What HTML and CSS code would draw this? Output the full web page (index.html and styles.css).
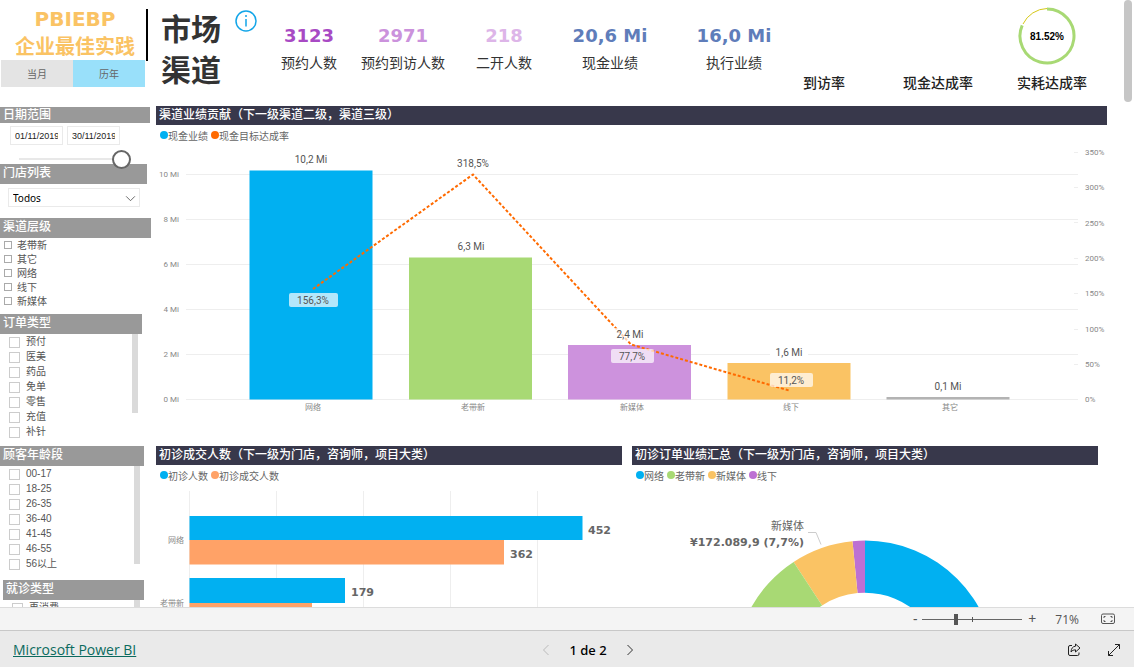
FILE: index.html
```html
<!DOCTYPE html>
<html lang="zh-CN">
<head>
<meta charset="utf-8">
<title>市场渠道 - Microsoft Power BI</title>
<link rel="stylesheet" href="styles.css">
</head>
<body>
<div class="report">
  <aside class="sidebar">
    <div class="brand"><span>PBIEBP</span><span>企业最佳实践</span></div>
    <div class="period">
      <button type="button" class="period-btn">当月</button>
      <button type="button" class="period-btn active">历年</button>
    </div>

    <section class="slicer slicer-date">
      <h2 class="slicer-title slim">日期范围</h2>
      <div class="dates">
        <input class="date" type="text" value="01/11/2019" aria-label="开始日期">
        <input class="date" type="text" value="30/11/2019" aria-label="结束日期">
      </div>
      <input class="date-range" type="range" min="0" max="100" value="100" aria-label="日期范围">
    </section>

    <section class="slicer slicer-store">
      <h2 class="slicer-title">门店列表</h2>
      <div class="select-wrap">
        <select class="select" aria-label="门店列表"><option>Todos</option></select>
        <svg class="chevron" viewBox="0 0 12 8" aria-hidden="true"><path d="M1 1.5l5 5 5-5"/></svg>
      </div>
    </section>

    <section class="slicer slicer-level">
      <h2 class="slicer-title">渠道层级</h2>
      <div class="options compact">
        <label class="option"><input type="checkbox">老带新</label>
        <label class="option"><input type="checkbox">其它</label>
        <label class="option"><input type="checkbox">网络</label>
        <label class="option"><input type="checkbox">线下</label>
        <label class="option"><input type="checkbox">新媒体</label>
      </div>
    </section>

    <section class="slicer slicer-order">
      <h2 class="slicer-title">订单类型</h2>
      <div class="scroll-list">
        <div class="options">
          <label class="option"><input type="checkbox">预付</label>
          <label class="option"><input type="checkbox">医美</label>
          <label class="option"><input type="checkbox">药品</label>
          <label class="option"><input type="checkbox">免单</label>
          <label class="option"><input type="checkbox">零售</label>
          <label class="option"><input type="checkbox">充值</label>
          <label class="option"><input type="checkbox">补针</label>
        </div>
        <span class="list-thumb short"></span>
      </div>
    </section>

    <section class="slicer slicer-age">
      <h2 class="slicer-title">顾客年龄段</h2>
      <div class="scroll-list">
        <div class="options">
          <label class="option"><input type="checkbox">00-17</label>
          <label class="option"><input type="checkbox">18-25</label>
          <label class="option"><input type="checkbox">26-35</label>
          <label class="option"><input type="checkbox">36-40</label>
          <label class="option"><input type="checkbox">41-45</label>
          <label class="option"><input type="checkbox">46-55</label>
          <label class="option"><input type="checkbox">56以上</label>
        </div>
        <span class="list-thumb"></span>
      </div>
    </section>

    <section class="slicer slicer-visit">
      <h2 class="slicer-title">就诊类型</h2>
      <div class="scroll-list">
        <div class="options">
          <label class="option"><input type="checkbox">再消费</label>
        </div>
        <span class="list-thumb"></span>
      </div>
    </section>
  </aside>

  <main class="main">
    <header class="header">
      <h1 class="title">市场<br>渠道</h1>
      <svg class="info" viewBox="0 0 24 24" role="img" aria-label="信息"><circle cx="12" cy="12" r="10"/><path d="M12 10v7.500"/><circle class="dot" cx="12" cy="7" r="1"/></svg>
      <div class="kpis">
        <div class="kpi"><strong class="value violet">3123</strong><span>预约人数</span></div>
        <div class="kpi"><strong class="value orchid">2971</strong><span>预约到访人数</span></div>
        <div class="kpi"><strong class="value lilac">218</strong><span>二开人数</span></div>
        <div class="kpi"><strong class="value blue">20,6 Mi</strong><span>现金业绩</span></div>
        <div class="kpi"><strong class="value blue">16,0 Mi</strong><span>执行业绩</span></div>
        <div class="rate"><span>到访率</span></div>
        <div class="rate"><span>现金达成率</span></div>
        <div class="rate">
          <svg class="gauge" viewBox="0 0 68 60"><path class="gauge-rest" d="M5 18A27.500 27.500 0 0 1 29 2.500"/><path class="gauge-fill" d="M29 3A27 27 0 1 1 4.200 19.300"/><text x="29" y="34">81.52%</text></svg>
          <span>实耗达成率</span>
        </div>
      </div>
    </header>

    <section class="panel">
      <h2 class="panel-title">渠道业绩贡献（下一级渠道二级，渠道三级）</h2>
      <div class="legend">
        <span class="key c-blue">现金业绩</span><span class="key c-orange">现金目标达成率</span>
      </div>
      <svg class="chart" viewBox="156 145 951 301">
        <path class="grid" d="M186 174.500H1078M186 219.500H1078M186 264.500H1078M186 309.500H1078M186 354.500H1078M186 399.500H1078"/>
        <path class="grid" d="M1074 152.500h4M1074 187.500h4M1074 222.500h4M1074 258.500h4M1074 293.500h4M1074 329.500h4M1074 364.500h4"/>
        <g class="axis end">
          <text x="179" y="177">10 Mi</text><text x="179" y="222">8 Mi</text><text x="179" y="267">6 Mi</text><text x="179" y="312">4 Mi</text><text x="179" y="357">2 Mi</text><text x="179" y="402">0 Mi</text>
        </g>
        <g class="axis">
          <text x="1085" y="155">350%</text><text x="1085" y="190">300%</text><text x="1085" y="226">250%</text><text x="1085" y="261">200%</text><text x="1085" y="296">150%</text><text x="1085" y="332">100%</text><text x="1085" y="367">50%</text><text x="1085" y="402">0%</text>
        </g>
        <rect class="f-blue" x="249.500" y="170.500" width="123" height="229"/>
        <rect class="f-green" x="409" y="257.500" width="123" height="142"/>
        <rect class="f-orchid" x="568" y="345" width="123" height="54.500"/>
        <rect class="f-yellow" x="727.500" y="363" width="123" height="36.500"/>
        <rect class="f-grey" x="886.500" y="397" width="123" height="2.500"/>
        <path class="trend" d="M313 289L473 174.500L631 344.500L789 390.500"/>
        <rect class="halo" x="612" y="328" width="36" height="13"/>
        <rect class="f-white" x="770" y="346" width="38" height="13"/>
        <rect class="tag" x="289" y="293" width="49" height="14" rx="2"/>
        <rect class="tag" x="611" y="349" width="43" height="14" rx="2"/>
        <rect class="tag" x="770" y="373" width="43" height="14" rx="2"/>
        <g class="data">
          <text x="311" y="163">10,2 Mi</text><text x="473" y="167">318,5%</text><text x="471" y="250">6,3 Mi</text><text x="630" y="338">2,4 Mi</text><text x="789" y="356">1,6 Mi</text><text x="948" y="390">0,1 Mi</text>
          <text x="313" y="304">156,3%</text><text x="632" y="360">77,7%</text><text x="791" y="384">11,2%</text>
        </g>
        <g class="axis mid">
          <text x="313" y="410">网络</text><text x="473" y="410">老带新</text><text x="632" y="410">新媒体</text><text x="791" y="410">线下</text><text x="950" y="410">其它</text>
        </g>
      </svg>
    </section>

    <div class="row">
      <section class="panel">
        <h2 class="panel-title">初诊成交人数（下一级为门店，咨询师，项目大类）</h2>
        <div class="legend">
          <span class="key c-blue">初诊人数</span><span class="key c-peach">初诊成交人数</span>
        </div>
        <svg class="chart" viewBox="156 485 466 150">
          <path class="grid" d="M189.500 491V635M276.500 491V635M363.500 491V635M450.500 491V635M537.500 491V635"/>
          <rect class="f-blue" x="189.500" y="516" width="393" height="24"/>
          <rect class="f-peach" x="189.500" y="540" width="314.500" height="24.500"/>
          <rect class="f-blue" x="189.500" y="578" width="155.500" height="25"/>
          <rect class="f-peach" x="189.500" y="603" width="122.500" height="24"/>
          <g class="axis end"><text x="184" y="543">网络</text><text x="184" y="606">老带新</text></g>
          <g class="strong"><text x="588" y="534">452</text><text x="510" y="558">362</text><text x="351" y="596">179</text></g>
        </svg>
      </section>
      <section class="panel">
        <h2 class="panel-title">初诊订单业绩汇总（下一级为门店，咨询师，项目大类）</h2>
        <div class="legend">
          <span class="key c-blue">网络</span><span class="key c-green">老带新</span><span class="key c-yellow">新媒体</span><span class="key c-purple">线下</span>
        </div>
        <svg class="chart" viewBox="632 485 466 186">
          <path class="f-blue" d="M865 540.600A130.400 130.400 0 0 1 995.400 671H943.300A78.300 78.300 0 0 0 865 592.700Z"/>
          <path class="f-purple" d="M865 540.600A130.400 130.400 0 0 0 852.500 541.200L857.500 593.100A78.300 78.300 0 0 1 865 592.700Z"/>
          <path class="f-yellow" d="M852.500 541.200A130.400 130.400 0 0 0 793.600 561.900L822.100 605.500A78.300 78.300 0 0 1 857.500 593.100Z"/>
          <path class="f-green" d="M793.600 561.900A130.400 130.400 0 0 0 734.600 671H786.700A78.300 78.300 0 0 1 822.100 605.500Z"/>
          <path class="leader" d="M808 532.500h8l5 12"/>
          <text class="slice-name" x="804" y="530">新媒体</text>
          <text class="slice-value" x="804" y="546">¥172.089,9 (7,7%)</text>
        </svg>
      </section>
    </div>
  </main>
  <span class="page-thumb"></span>
</div>

<div class="zoombar">
  <button type="button" class="zoom-btn" aria-label="缩小">-</button>
  <div class="zoom-track"><input class="zoom-range" type="range" min="0" max="100" value="33" aria-label="缩放"></div>
  <button type="button" class="zoom-btn" aria-label="放大">+</button>
  <span class="zoom-value">71%</span>
  <button type="button" class="icon-btn" aria-label="适应页面"><svg class="fit" viewBox="0 0 14 12"><rect x=".5" y="1" width="13" height="9.500" rx="1.500"/><path d="M3 5V3.500h1.500M9.500 3.500H11V5M11 7v1.500H9.500M4.500 8.500H3V7"/></svg></button>
</div>

<footer class="footer">
  <a class="brand-link" href="#">Microsoft Power BI</a>
  <nav class="pager" aria-label="页面">
    <button type="button" class="icon-btn" disabled aria-label="上一页"><svg class="arrow" viewBox="0 0 8 12"><path d="M6.500 1L1.500 6l5 5"/></svg></button>
    <span>1 de 2</span>
    <button type="button" class="icon-btn" aria-label="下一页"><svg class="arrow" viewBox="0 0 8 12"><path d="M1.500 1l5 5-5 5"/></svg></button>
  </nav>
  <div class="actions">
    <button type="button" class="icon-btn" aria-label="共享"><svg class="action" viewBox="0 0 14 14"><path d="M5 2.500H3Q1.500 2.500 1.500 4v7Q1.500 12.500 3 12.500h7.500Q12 12.500 12 11V9.500"/><path d="M8.500 1l4.500 4-4.500 4V6.800Q5.500 6.600 4 9 4.300 3.600 8.500 3.200Z"/></svg></button>
    <button type="button" class="icon-btn" aria-label="全屏"><svg class="action" viewBox="0 0 14 14"><path d="M1.500 12.500l11-11M8 1.500h4.500V6M1.500 8v4.500H6"/></svg></button>
  </div>
</footer>
</body>
</html>
```

FILE: styles.css
```css
* { box-sizing: border-box; }

body {
  margin: 0;
  height: 100vh;
  display: flex;
  flex-direction: column;
  overflow: hidden;
  background: #fff;
  color: #333;
  font-family: "Liberation Sans", "Noto Sans CJK SC", sans-serif;
}

h1, h2 { margin: 0; }
button { border: 0; padding: 0; background: none; font-family: inherit; color: inherit; }

.report {
  flex: 1;
  min-height: 0;
  display: flex;
  align-items: flex-start;
  overflow: hidden;
}

/* Sidebar */
.sidebar { width: 156px; flex: none; }
.brand {
  display: flex;
  flex-direction: column;
  width: 150px;
  height: 60px;
  padding-top: 5px;
  text-align: center;
  color: #fac364;
  font: bold 20px/28px "DejaVu Sans", "Noto Sans CJK SC", sans-serif;
}
.period { display: flex; width: 145px; height: 27px; padding-left: 1px; }
.period-btn { flex: 1; background: #e4e4e4; color: #666; font-size: 10px; }
.period-btn.active { background: #99e0fa; }

.slicer-date { margin-top: 20px; width: 150px; }
.slicer-store { width: 147px; margin-bottom: 11px; }
.slicer-level { width: 151px; margin-bottom: 6px; }
.slicer-order { width: 142px; margin-bottom: 7px; }
.slicer-age { width: 144px; margin-bottom: 9px; }
.slicer-visit { width: 144px; padding-left: 3px; }
.slicer-title {
  height: 20px;
  padding-left: 3px;
  background: #999;
  color: #fff;
  font-size: 12px;
  font-weight: 500;
  line-height: 19px;
}
.slicer-title.slim { height: 16px; line-height: 16px; }

.dates { display: flex; gap: 4px; padding: 3px 0 0 10px; }
.date {
  width: 53px;
  height: 19px;
  padding: 0 4px;
  border: 1px solid #eaeaea;
  color: #222;
  font: 9px "Liberation Sans", sans-serif;
}
.date-range {
  display: block;
  position: relative;
  z-index: 1;
  appearance: none;
  width: 112px;
  height: 10px;
  margin: 9px 0 0 19px;
  background: linear-gradient(#e8e8e8, #e8e8e8) center / 100% 2px no-repeat;
}
.date-range::-webkit-slider-thumb {
  appearance: none;
  width: 19px;
  height: 19px;
  border: 2px solid #666;
  border-radius: 50%;
  background: #fff;
}

.select-wrap { position: relative; margin: 4px 7px 0 8px; }
.select {
  display: block;
  appearance: none;
  width: 100%;
  height: 19px;
  padding: 0 4px;
  border: 1px solid #eaeaea;
  border-radius: 0;
  background: #fff;
  color: #000;
  font: 10px "Noto Sans", sans-serif;
}
.chevron { position: absolute; right: 4px; top: 7px; width: 11px; height: 7px; fill: none; stroke: #555; pointer-events: none; }

.options { flex: 1; padding-left: 9px; }
.option {
  display: flex;
  align-items: center;
  gap: 6px;
  height: 15px;
  color: #555;
  font-size: 10px;
  line-height: 15px;
}
.option input {
  appearance: none;
  width: 11px;
  height: 11px;
  margin: 2px 0 0;
  border: 1px solid #ccc;
  background: #fff;
}
.compact { padding-left: 4px; }
.compact .option { height: 14px; gap: 5px; }
.compact .option input { width: 8px; height: 8px; margin: 0; border-color: #aaa; }
.scroll-list { display: flex; padding-right: 4px; }
.list-thumb { width: 6px; height: 98px; background: #dadada; }
.list-thumb.short { height: 79px; }

/* Header */
.main { flex: 1; min-width: 0; margin-right: 27px; }
.header { display: flex; height: 106px; margin-left: -10px; }
.title {
  height: 52px;
  margin-top: 9px;
  padding-left: 13px;
  border-left: 2px solid #000;
  color: #333;
  font-size: 30px;
  line-height: 41px;
}
.info { width: 24px; height: 24px; margin: 9px 4px 0 13px; fill: none; stroke: #12a5e8; stroke-width: 1.500; }
.info .dot { fill: #12a5e8; stroke: none; }
.kpis {
  flex: 1;
  display: grid;
  grid-template-columns:
    minmax(0, 94fr) minmax(0, 94fr) minmax(0, 108fr) minmax(0, 104fr)
    minmax(0, 144fr) minmax(0, 36fr) minmax(0, 192fr) minmax(0, 36fr);
  justify-items: center;
  padding-right: 37px;
}
.kpi, .rate {
  display: flex;
  flex-direction: column;
  align-items: center;
  white-space: nowrap;
  font-size: 14px;
}
.kpi { padding-top: 25px; line-height: 20px; gap: 6px; }
.value { font: bold 18px/22px "DejaVu Sans", sans-serif; }
.violet { color: #a84ac4; }
.orchid { color: #cb92dc; }
.lilac { color: #ddb5e8; }
.blue { color: #5f7dba; }
.rate { justify-content: flex-end; padding-bottom: 13px; font-weight: 500; line-height: 20px; color: #222; }
.gauge { width: 68px; height: 60px; margin-bottom: 7px; overflow: visible; }
.gauge path { fill: none; }
.gauge-fill { stroke: #a8d974; stroke-width: 3; }
.gauge-rest { stroke: #d6c818; stroke-width: 1; }
.gauge text { text-anchor: middle; font: bold 10px "Liberation Sans", sans-serif; fill: #000; }

/* Panels */
.panel { min-width: 0; }
.panel-title {
  height: 19px;
  padding-left: 3px;
  overflow: hidden;
  background: #38384b;
  color: #fff;
  font-size: 12px;
  font-weight: 500;
  line-height: 18px;
  white-space: nowrap;
}
.legend { display: flex; gap: 3px; height: 20px; padding-left: 4px; align-items: center; font-size: 10px; color: #666; }
.key { display: flex; align-items: center; }
.key::before { content: ""; width: 8px; height: 8px; border-radius: 50%; background: currentColor; }
.c-blue::before { background: #01b0f1; }
.c-orange::before { background: #ff6a00; }
.c-peach::before { background: #ffa267; }
.c-green::before { background: #a8d974; }
.c-yellow::before { background: #fac364; }
.c-purple::before { background: #bd70d3; }
.row { display: grid; grid-template-columns: 1fr 1fr; gap: 10px; padding-right: 9px; }

/* Charts */
.chart { display: block; width: 100%; height: auto; }
.grid { fill: none; stroke: #eee; }
.axis { font: 8px Roboto, "Noto Sans CJK SC", sans-serif; fill: #888; }
.end { text-anchor: end; }
.mid, .data { text-anchor: middle; }
.data { font: 10px Roboto, sans-serif; fill: #555; }
.strong { font: bold 11px "DejaVu Sans", sans-serif; fill: #666; }
.trend { fill: none; stroke: #ff6a00; stroke-width: 2; stroke-dasharray: 3 2; }
.tag, .halo { fill: #fff; fill-opacity: .7; }
.f-blue { fill: #01b0f1; }
.f-green { fill: #a8d974; }
.f-orchid { fill: #cd92dd; }
.f-yellow { fill: #fac364; }
.f-purple { fill: #bd70d3; }
.f-peach { fill: #ffa267; }
.f-grey { fill: #b3b3b3; }
.f-white { fill: #fff; }
.leader { fill: none; stroke: #ccc; }
.slice-name { text-anchor: end; font-size: 11px; fill: #666; }
.slice-value { text-anchor: end; font: bold 11px "DejaVu Sans", sans-serif; fill: #666; }

.page-thumb { position: absolute; top: 0; right: 2px; width: 8px; height: 102px; border-radius: 4px; background: #c6c6c6; }

/* Zoom bar */
.zoombar {
  display: flex;
  align-items: center;
  justify-content: flex-end;
  height: 23px;
  padding-right: 19px;
  border-top: 1px solid #dcdcdc;
  background: #f4f4f4;
  color: #555;
}
.zoom-btn { width: 14px; font: 14px/20px "Noto Sans", sans-serif; }
.zoom-track { position: relative; width: 100px; height: 12px; margin: 0 3px 0 0; }
.zoom-track::after { content: ""; position: absolute; left: 50px; top: 4px; width: 1px; height: 5px; background: #555; }
.zoom-range {
  display: block;
  appearance: none;
  width: 100%;
  height: 12px;
  margin: 0;
  background: linear-gradient(#666, #666) center / 100% 1px no-repeat;
}
.zoom-range::-webkit-slider-thumb { appearance: none; width: 4px; height: 11px; background: #555; }
.zoom-value { margin: 0 22px 0 16px; font: 12px "Open Sans", sans-serif; }
.icon-btn { display: flex; }
.icon-btn svg { fill: none; stroke: #333; }
.icon-btn .fit { width: 14px; height: 12px; stroke: #555; }

/* Footer */
.footer {
  display: grid;
  grid-template-columns: 1fr auto 1fr;
  align-items: center;
  height: 37px;
  padding: 2px 13px 0;
  border-top: 1px solid #c8c8c8;
  background: #eaeaea;
}
.brand-link { color: #0b6a5e; font: 14px/20px "Open Sans", sans-serif; }
.pager { display: flex; align-items: center; gap: 19px; margin-left: 42px; color: #000; font: 500 13px/20px "Noto Sans", sans-serif; }
.arrow { width: 8px; height: 12px; }
.icon-btn:disabled svg { stroke: #bbb; }
.actions { display: flex; justify-content: flex-end; gap: 26px; }
.action { width: 14px; height: 14px; }
.icon-btn .action { stroke: #222; }
```
